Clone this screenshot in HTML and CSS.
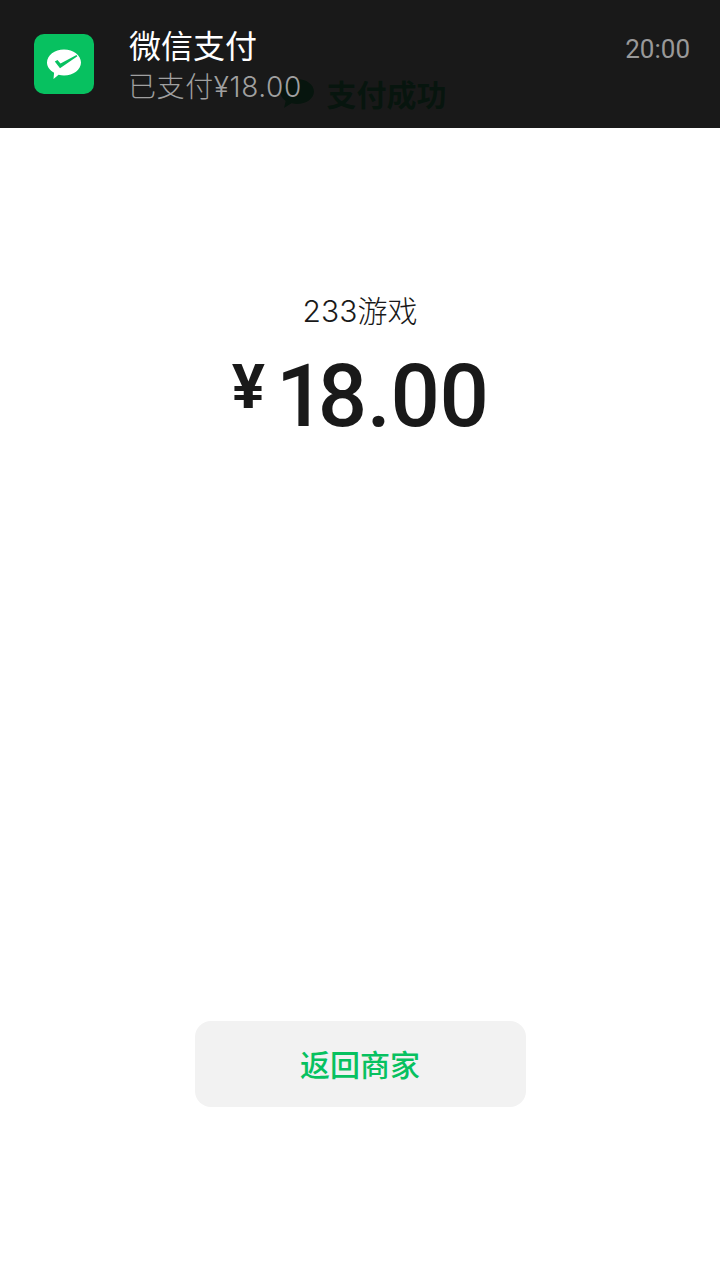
FILE: index.html
```html
<!DOCTYPE html>
<html lang="zh-CN">
<head>
    <meta charset="UTF-8">
    <meta name="viewport" content="width=device-width, initial-scale=1.0">
    <title>支付成功</title>
    <link rel="stylesheet" href="styles.css">
</head>
<body>
    <div class="notice">
        <svg class="notice-logo" width="60" height="60" viewBox="0 0 60 60">
            <rect width="60" height="60" rx="10" fill="#07c160"/>
            <path d="M30 15.500c9.400 0 17 5.900 17 13s-7.600 13-17 13c-1.900 0-3.700-.2-5.400-.7l-5.100 4.200.6-6.300C15.700 36.400 13 32.700 13 28.500c0-7.100 7.600-13 17-13z" fill="#fff"/>
            <path d="M20.800 27.400l2.700-1.400 3 3.400L42.500 21l.9 1.200L26 34.200z" fill="#07c160"/>
        </svg>
        <div class="notice-text">
            <div class="notice-title">微信支付</div>
            <div class="notice-body">已支付¥18.00</div>
        </div>
        <div class="notice-time">20:00</div>
    </div>

    <div class="page">
        <div class="status">
            <svg class="status-icon" width="36" height="30" viewBox="0 0 36 30">
                <path d="M18 1c9.400 0 17 5.500 17 12.500S27.400 26 18 26c-1.900 0-3.700-.2-5.400-.7L5 30l1.600-7.100C3.200 20.600 1 17.300 1 13.500 1 6.500 8.600 1 18 1z" fill="#07c160"/>
            </svg>
            <span class="status-text">支付成功</span>
        </div>
        <div class="shop">233游戏</div>
        <div class="amount">
            <span class="amount-sign">¥</span>
            <span class="amount-num"><span class="amount-one">1</span>8.00</span>
        </div>
        <button class="back-btn">返回商家</button>
    </div>
</body>
</html>
```
FILE: styles.css
```css
body {
    margin: 0;
    background-color: #fff;
    font-family: Roboto, "Noto Sans CJK SC", sans-serif;
}
.notice {
    position: absolute;
    top: 0;
    left: 0;
    width: 720px;
    height: 128px;
    box-sizing: border-box;
    padding: 27px 30px 0 34px;
    display: flex;
    align-items: flex-start;
    background-color: rgba(8, 8, 8, 0.93);
}
.notice-logo {
    margin-top: 7px;
    flex-shrink: 0;
}
.notice-text {
    margin-left: 35px;
    flex: 1;
}
.notice-title {
    color: #fff;
    font-size: 32px;
    line-height: 40px;
}
.notice-body {
    margin-left: -1px;
    color: #a0a0a0;
    font-family: Inter, "Noto Sans CJK SC", sans-serif;
    font-size: 28px;
    font-weight: 300;
    letter-spacing: 0.6px;
    line-height: 40px;
}
.notice-time {
    color: #999;
    font-size: 26px;
    line-height: 44px;
}
.page {
    height: 1280px;
    display: flex;
    flex-direction: column;
    align-items: center;
}
.status {
    margin: 73px 0 0 5px;
    display: flex;
    align-items: center;
    gap: 12px;
    height: 40px;
}
.status-icon {
    flex-shrink: 0;
}
.status-text {
    color: #07c160;
    font-size: 30px;
    font-weight: 700;
}
.shop {
    margin-top: 178px;
    color: #191919;
    font-family: Inter, "Noto Sans CJK SC", sans-serif;
    font-size: 30px;
    font-weight: 300;
    line-height: 40px;
}
.amount {
    margin-top: 15px;
    display: flex;
    align-items: flex-start;
    gap: 11px;
    color: #191919;
    height: 100px;
}
.amount-sign {
    font-size: 62px;
    font-weight: 700;
    line-height: 82px;
}
.amount-num {
    font-size: 87px;
    font-weight: 500;
    letter-spacing: -0.5px;
    line-height: 100px;
}
.amount-one {
    letter-spacing: -7.5px;
}
.back-btn {
    margin-top: 575px;
    width: 331px;
    height: 86px;
    padding: 0 0 2px;
    border: none;
    border-radius: 16px;
    background-color: #f2f2f2;
    color: #07c160;
    font-family: inherit;
    font-size: 30px;
    font-weight: 500;
}
```
